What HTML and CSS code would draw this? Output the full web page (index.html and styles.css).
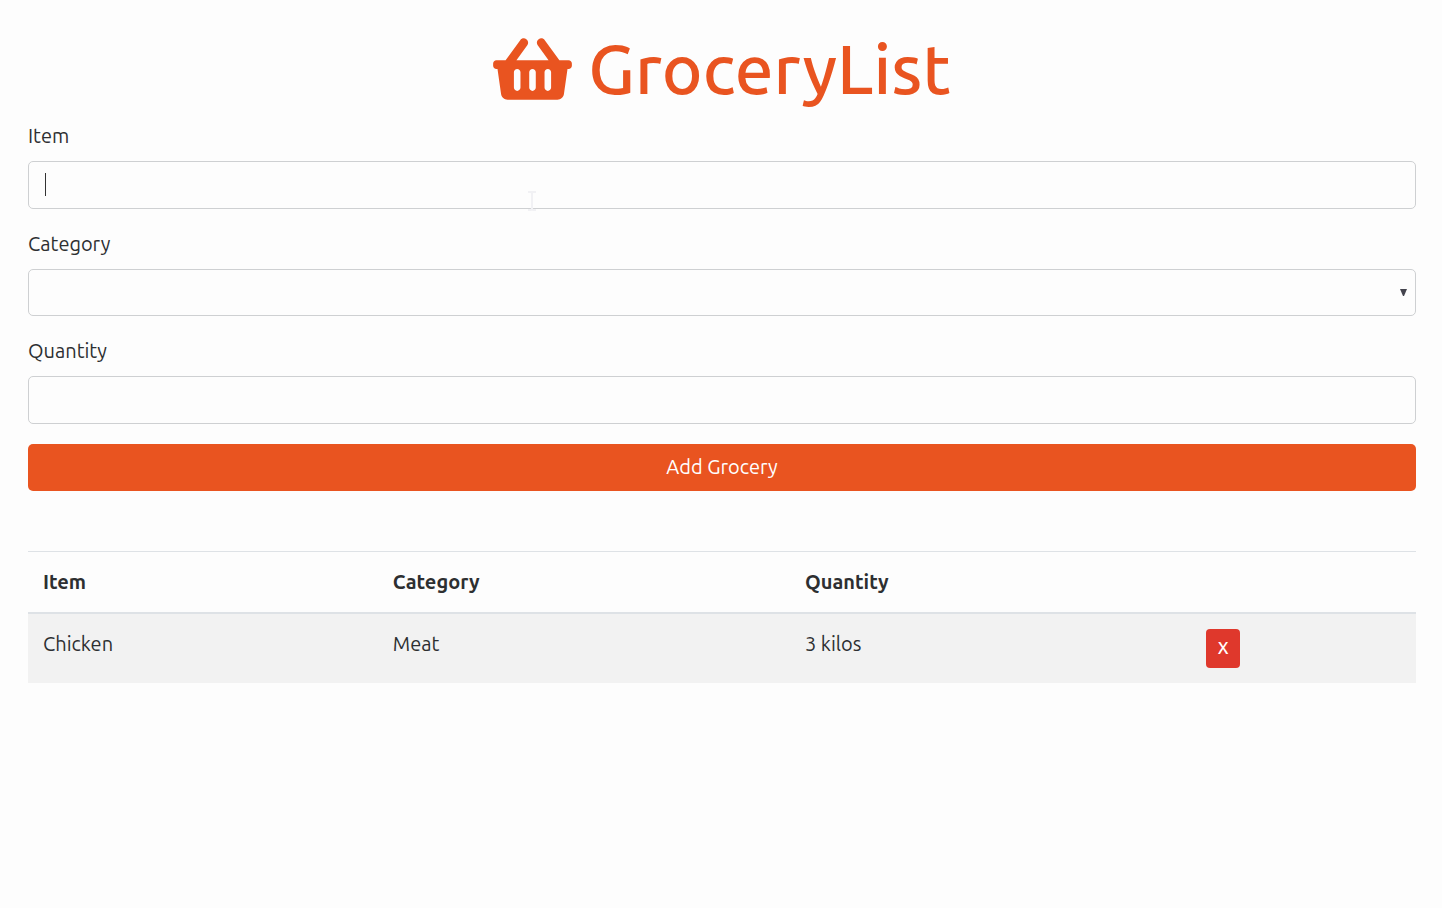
FILE: index.html
```html
<!DOCTYPE html>
<html lang="en">
<head>
<meta charset="utf-8">
<meta name="viewport" content="width=device-width, initial-scale=1">
<title>GroceryList</title>
<link rel="stylesheet" href="styles.css">
</head>
<body>
<main class="container">
  <h1 class="brand">
    <svg class="brand-icon" viewBox="0 0 576 512" aria-hidden="true"><path fill="currentColor" d="M576 216v16c0 13.255-10.745 24-24 24h-8l-26.113 182.788C514.509 462.435 494.257 480 470.37 480H105.63c-23.887 0-44.139-17.565-47.518-41.212L32 256h-8c-13.255 0-24-10.745-24-24v-16c0-13.255 10.745-24 24-24h67.341l106.78-146.821c10.395-14.292 30.407-17.453 44.701-7.058 14.293 10.395 17.453 30.408 7.058 44.701L170.477 192h235.046L326.12 82.821c-10.395-14.292-7.234-34.306 7.059-44.701 14.291-10.395 34.306-7.235 44.701 7.058L484.659 192H552c13.255 0 24 10.745 24 24zM312 392V280c0-13.255-10.745-24-24-24s-24 10.745-24 24v112c0 13.255 10.745 24 24 24s24-10.745 24-24zm112 0V280c0-13.255-10.745-24-24-24s-24 10.745-24 24v112c0 13.255 10.745 24 24 24s24-10.745 24-24zm-224 0V280c0-13.255-10.745-24-24-24s-24 10.745-24 24v112c0 13.255 10.745 24 24 24s24-10.745 24-24z"/></svg>
    <span>GroceryList</span>
  </h1>
  <form class="grocery-form">
    <div class="form-group">
      <label for="item">Item</label>
      <div class="field">
        <input class="form-control" id="item" type="text">
        <span class="caret"></span>
        <svg class="pointer" viewBox="0 0 8 20" aria-hidden="true"><path d="M0 1h3l1 1 1-1h3M4 2v16M0 19h3l1-1 1 1h3" fill="none" stroke="currentColor" stroke-width="2"/></svg>
      </div>
    </div>
    <div class="form-group">
      <label for="category">Category</label>
      <div class="field">
        <select class="form-control" id="category"><option value=""></option></select>
        <svg class="arrow" viewBox="0 0 7 7" aria-hidden="true"><path d="M0 0h7L4 7H3z" fill="currentColor"/></svg>
      </div>
    </div>
    <div class="form-group">
      <label for="quantity">Quantity</label>
      <input class="form-control" id="quantity" type="text">
    </div>
    <button class="btn btn-primary" type="button">Add Grocery</button>
  </form>
  <table class="grocery-table">
    <colgroup><col class="col-item"><col class="col-category"><col class="col-quantity"><col></colgroup>
    <thead>
      <tr><th scope="col">Item</th><th scope="col">Category</th><th scope="col">Quantity</th><th></th></tr>
    </thead>
    <tbody>
      <tr><td>Chicken</td><td>Meat</td><td>3 kilos</td><td><button class="btn btn-danger" type="button">X</button></td></tr>
    </tbody>
  </table>
</main>
</body>
</html>
```
FILE: styles.css
```css
*, *::before, *::after { box-sizing: border-box; }

body {
  margin: 0;
  background: #fdfdfd;
  color: #2d2f31;
  font-family: Ubuntu, "Noto Sans", sans-serif;
  font-size: 20px;
  line-height: 30px;
}

.container { padding: 27px 26px 28px 28px; }

.brand {
  display: flex;
  justify-content: center;
  align-items: center;
  gap: 16px;
  margin: 0 0 10px;
  color: #e95420;
  font-size: 69px;
  font-weight: 500;
  line-height: 84px;
}

.brand-icon { width: 79px; height: 70px; }

.form-group { margin-bottom: 20px; }

label {
  display: block;
  margin-bottom: 10px;
}

.field { position: relative; }

.form-control {
  display: block;
  width: 100%;
  height: 48px;
  padding: 8px 16px;
  border: 1px solid #ced0d2;
  border-radius: 5px;
  outline: 0;
  background: #fdfdfd;
  color: #495057;
  font: inherit;
}

select.form-control {
  height: 47px;
  appearance: none;
}

.caret {
  position: absolute;
  top: 12px;
  left: 17px;
  width: 1px;
  height: 23px;
  background: #333;
}

.pointer {
  position: absolute;
  top: 30px;
  left: 500px;
  width: 8px;
  height: 20px;
  color: #f1f1f4;
}

.arrow {
  position: absolute;
  top: 20px;
  right: 9px;
  width: 7px;
  height: 7px;
  color: #43434d;
}

.btn {
  border: 0;
  color: #fff;
  font: inherit;
}

.btn-primary {
  display: block;
  width: 100%;
  height: 47px;
  padding: 0 0 2px;
  border-radius: 5px;
  background: #e95420;
}

.btn-danger {
  display: block;
  width: 34px;
  height: 39px;
  padding: 0 0 2px;
  border-radius: 4px;
  background: #df382c;
  font-size: 17px;
  font-weight: 500;
}

.grocery-table {
  width: 100%;
  margin-top: 60px;
  border-collapse: separate;
  border-spacing: 0;
  table-layout: fixed;
}

.col-item { width: 25.2%; }
.col-category { width: 29.7%; }
.col-quantity { width: 28.9%; }

th, td {
  padding: 15px;
  text-align: left;
  vertical-align: top;
}

th {
  border-top: 1px solid #dee2e6;
  border-bottom: 2px solid #dee2e6;
  font-weight: 700;
}

td { background: #f2f2f2; }
```
